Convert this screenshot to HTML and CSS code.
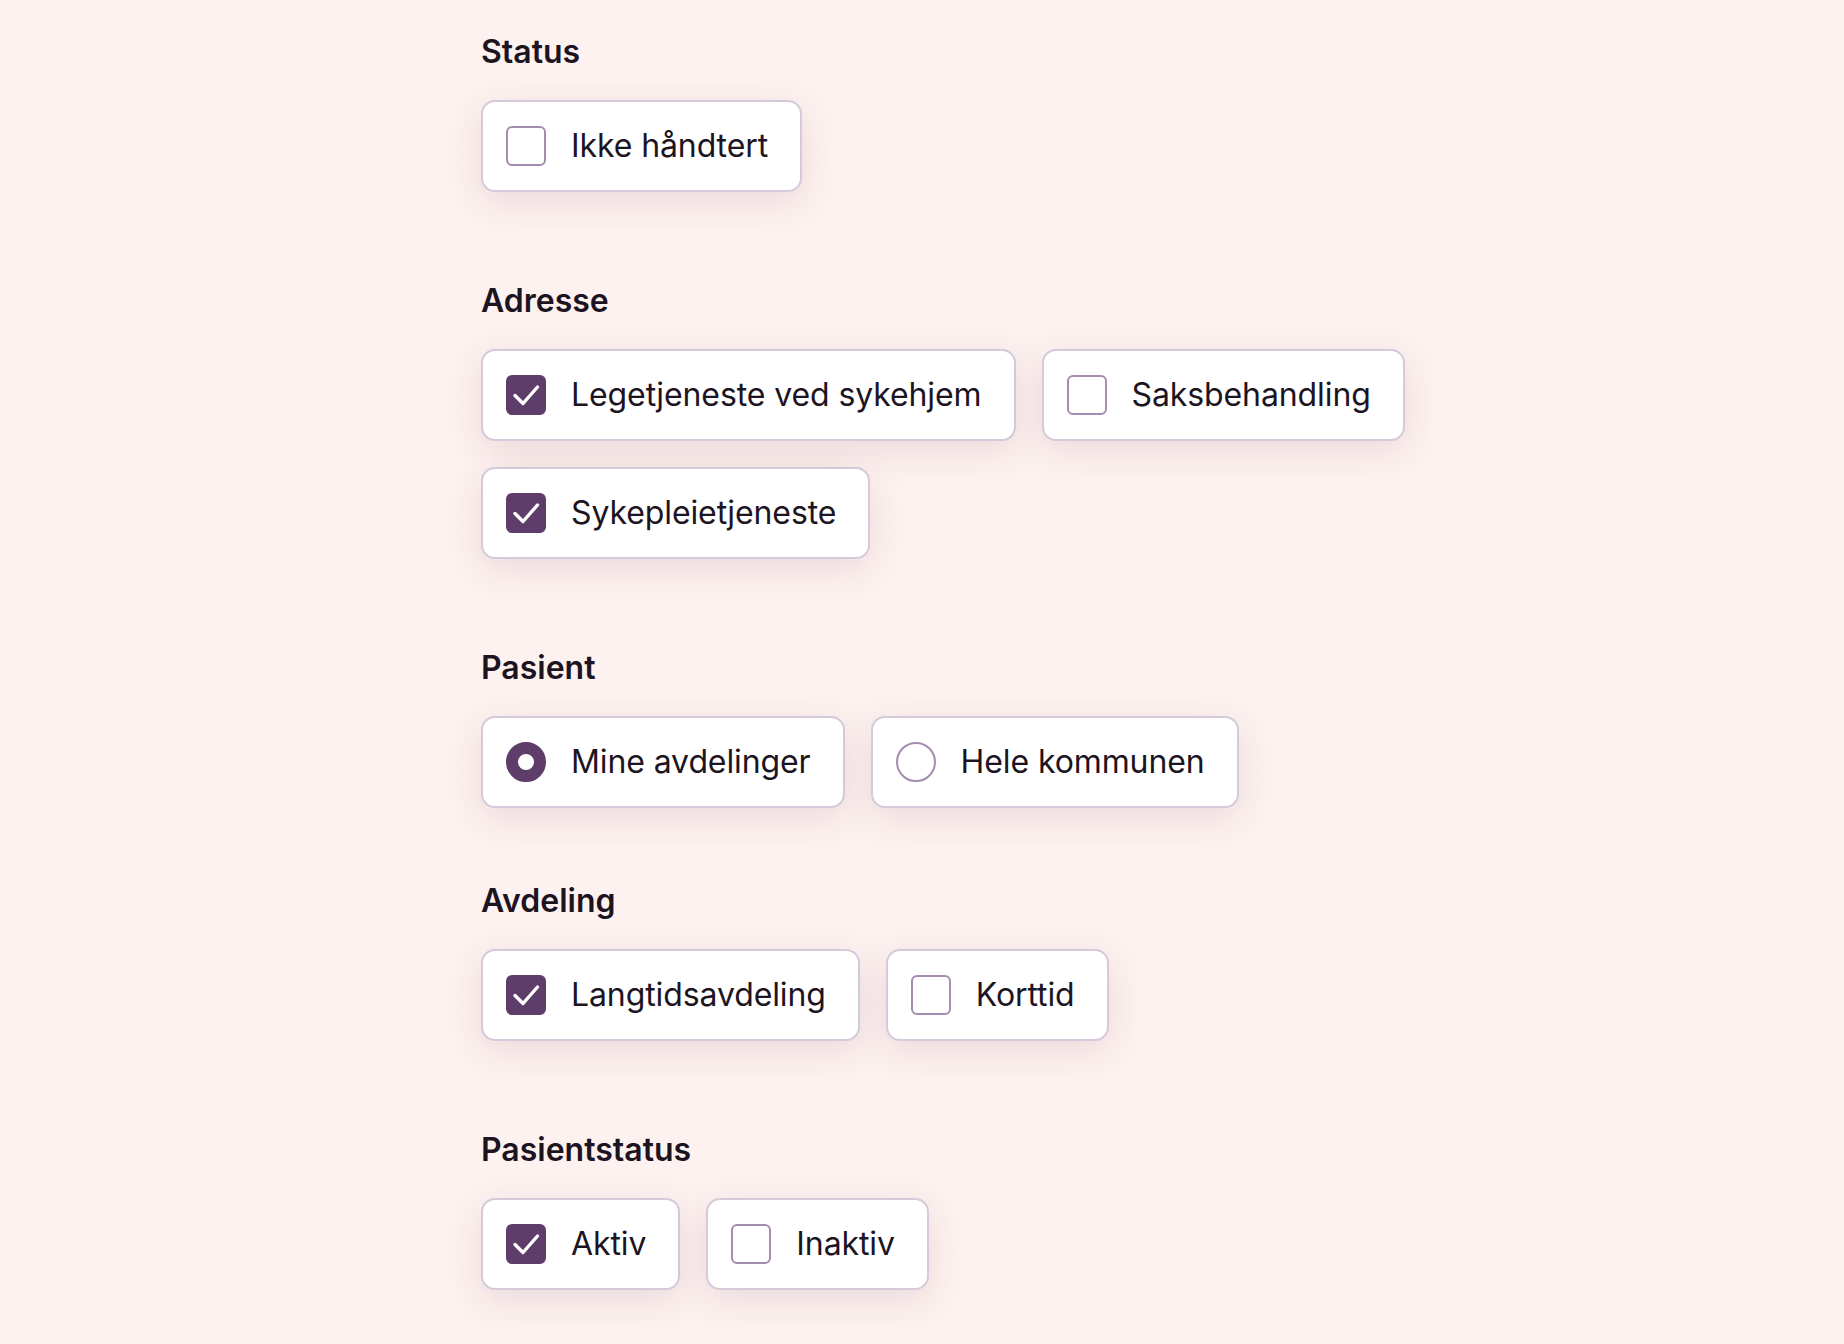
FILE: index.html
```html
<!DOCTYPE html>
<html lang="no">
<head>
<meta charset="utf-8">
<title>Filter</title>
<link rel="stylesheet" href="styles.css">
</head>
<body>
<main class="filters">
  <section class="group">
    <h2 class="group-title">Status</h2>
    <div class="options">
      <label class="option"><span class="box"></span><span class="text">Ikke håndtert</span></label>
    </div>
  </section>

  <section class="group">
    <h2 class="group-title">Adresse</h2>
    <div class="options">
      <label class="option"><span class="box checked"><svg viewBox="0 0 40 40"><path d="M9 20.5l8 8L31.5 12"/></svg></span><span class="text">Legetjeneste ved sykehjem</span></label>
      <label class="option"><span class="box"></span><span class="text">Saksbehandling</span></label>
      <label class="option"><span class="box checked"><svg viewBox="0 0 40 40"><path d="M9 20.5l8 8L31.5 12"/></svg></span><span class="text">Sykepleietjeneste</span></label>
    </div>
  </section>

  <section class="group group-radio">
    <h2 class="group-title">Pasient</h2>
    <div class="options">
      <label class="option"><span class="radio selected"></span><span class="text">Mine avdelinger</span></label>
      <label class="option"><span class="radio"></span><span class="text">Hele kommunen</span></label>
    </div>
  </section>

  <section class="group">
    <h2 class="group-title">Avdeling</h2>
    <div class="options">
      <label class="option"><span class="box checked"><svg viewBox="0 0 40 40"><path d="M9 20.5l8 8L31.5 12"/></svg></span><span class="text">Langtidsavdeling</span></label>
      <label class="option"><span class="box"></span><span class="text">Korttid</span></label>
    </div>
  </section>

  <section class="group">
    <h2 class="group-title">Pasientstatus</h2>
    <div class="options">
      <label class="option"><span class="box checked"><svg viewBox="0 0 40 40"><path d="M9 20.5l8 8L31.5 12"/></svg></span><span class="text">Aktiv</span></label>
      <label class="option"><span class="box"></span><span class="text">Inaktiv</span></label>
    </div>
  </section>
</main>
</body>
</html>
```

FILE: styles.css
```css
html, body {
  margin: 0;
  padding: 0;
}

body {
  background: #fdf2f0;
  font-family: Inter, "Noto Sans", "Liberation Sans", sans-serif;
  color: #1d1422;
  min-height: 1344px;
}

.filters {
  margin-left: 481px;
  max-width: 1000px;
  padding-top: 32px;
}

.group {
  margin-bottom: 89px;
}

.group-radio {
  margin-bottom: 73px;
}

.group-title {
  margin: 0 0 28px 0;
  font-size: 32px;
  line-height: 40px;
  font-weight: 600;
  color: #1d1422;
}

.options {
  display: flex;
  flex-wrap: wrap;
  gap: 26px;
}

.option {
  display: flex;
  align-items: center;
  gap: 25px;
  box-sizing: border-box;
  height: 92px;
  padding: 0 32px 0 23px;
  background: #ffffff;
  border: 2px solid #d6c9da;
  border-radius: 14px;
  box-shadow: 0 10px 36px rgba(110, 55, 75, 0.13);
  cursor: pointer;
}

.text {
  font-size: 32px;
  line-height: 40px;
  font-weight: 400;
  letter-spacing: -0.1px;
  color: #1d1422;
}

.box {
  box-sizing: border-box;
  width: 40px;
  height: 40px;
  border: 2px solid #a48bb0;
  border-radius: 6px;
  background: #fff;
  display: flex;
  align-items: center;
  justify-content: center;
  flex: none;
}

.box.checked {
  background: #5f3d6b;
  border-color: #5f3d6b;
}

.box svg {
  width: 40px;
  height: 40px;
  flex: none;
}

.box svg path {
  fill: none;
  stroke: #ffffff;
  stroke-width: 3.4;
  stroke-linecap: round;
  stroke-linejoin: round;
}

.radio {
  box-sizing: border-box;
  width: 40px;
  height: 40px;
  border: 2px solid #a48bb0;
  border-radius: 50%;
  background: #fff;
  flex: none;
}

.radio.selected {
  border: 12px solid #5f3d6b;
}
```
